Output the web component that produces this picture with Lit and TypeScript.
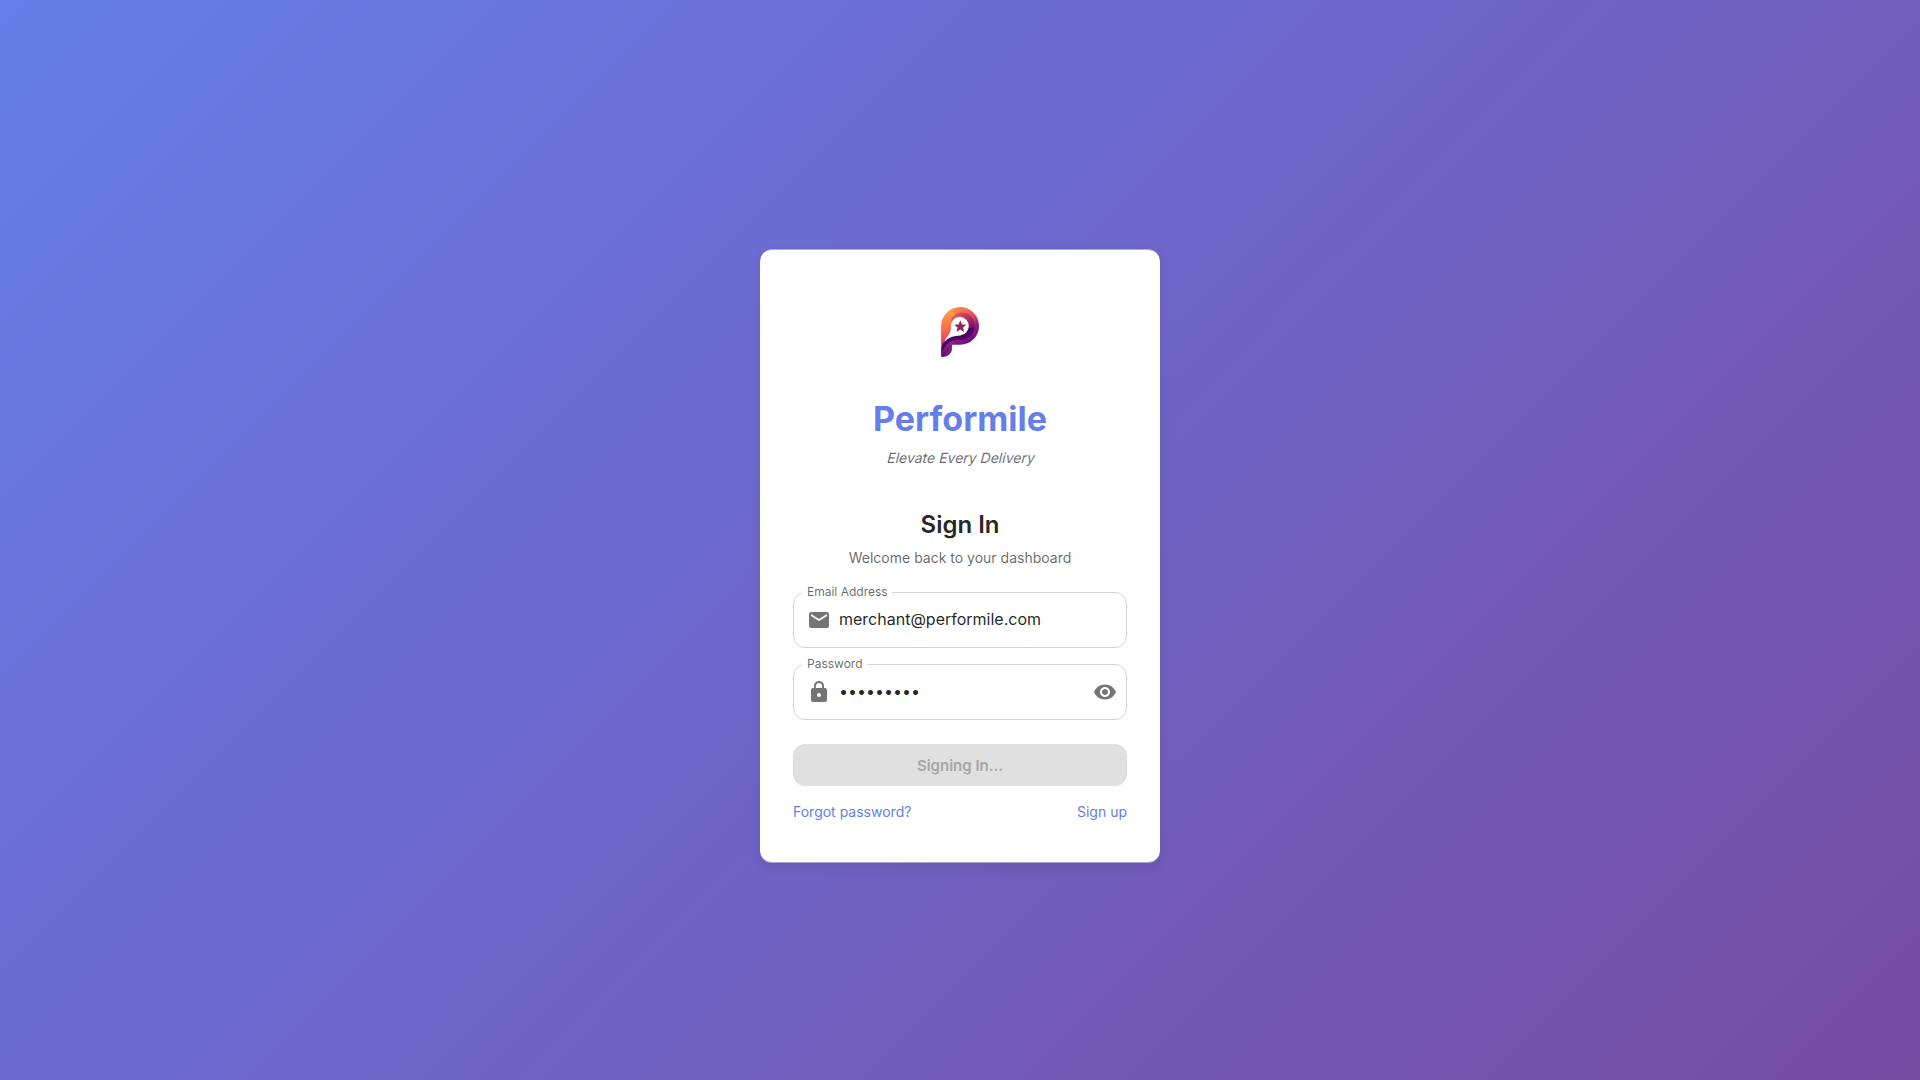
import { LitElement, html, css, svg } from "lit";
import { customElement, property } from "lit/decorators.js";

const icons = {
  mail: svg`<path d="M20 4H4c-1.1 0-1.99.9-1.99 2L2 18c0 1.1.9 2 2 2h16c1.1 0 2-.9 2-2V6c0-1.1-.9-2-2-2m0 4-8 5-8-5V6l8 5 8-5z"/>`,
  lock: svg`<path d="M18 8h-1V6c0-2.76-2.24-5-5-5S7 3.24 7 6v2H6c-1.1 0-2 .9-2 2v10c0 1.1.9 2 2 2h12c1.1 0 2-.9 2-2V10c0-1.1-.9-2-2-2m-6 9c-1.1 0-2-.9-2-2s.9-2 2-2 2 .9 2 2-.9 2-2 2m3.1-9H8.9V6c0-1.71 1.39-3.1 3.1-3.1s3.1 1.39 3.1 3.1z"/>`,
  eye: svg`<path d="M12 4.5C7 4.5 2.73 7.61 1 12c1.73 4.39 6 7.5 11 7.5s9.27-3.11 11-7.5c-1.73-4.39-6-7.5-11-7.5M12 17c-2.76 0-5-2.24-5-5s2.24-5 5-5 5 2.24 5 5-2.24 5-5 5m0-8c-1.66 0-3 1.34-3 3s1.34 3 3 3 3-1.34 3-3-1.34-3-3-3"/>`,
};

@customElement("brand-logo")
class BrandLogo extends LitElement {
  static styles = css`
    :host { display: block; width: 80px; height: 80px; }
    .mark { display: block; }
  `;
  render() {
    return html`<svg class="mark" width="80" height="80" viewBox="0 0 80 80">
      <defs>
        <linearGradient id="outer" gradientUnits="userSpaceOnUse" x1="27" y1="20" x2="51" y2="54">
          <stop offset="0" stop-color="#fd9a41"/><stop offset=".3" stop-color="#f66a50"/>
          <stop offset=".5" stop-color="#dc4564"/><stop offset=".72" stop-color="#8b1c7c"/>
          <stop offset="1" stop-color="#690983"/>
        </linearGradient>
        <linearGradient id="left" gradientUnits="userSpaceOnUse" x1="24" y1="24" x2="25" y2="54">
          <stop offset="0" stop-color="#fd9842"/><stop offset=".55" stop-color="#f76850"/>
          <stop offset="1" stop-color="#df3a72"/>
        </linearGradient>
        <linearGradient id="inner" gradientUnits="userSpaceOnUse" x1="34" y1="24" x2="52" y2="45">
          <stop offset="0" stop-color="#ee5952"/><stop offset=".5" stop-color="#a92a65"/>
          <stop offset="1" stop-color="#4c0567"/>
        </linearGradient>
        <linearGradient id="foot" gradientUnits="userSpaceOnUse" x1="30" y1="53" x2="23" y2="66">
          <stop offset="0" stop-color="#9b2386"/><stop offset="1" stop-color="#681178"/>
        </linearGradient>
      </defs>
      <path fill="url(#outer)" d="M21.3 36A19 19 0 0 1 40.2 17.1A18.8 18.8 0 0 1 59 36A18.8 18.8 0 0 1 40.2 54.8H32L21.3 66.8Z"/>
      <path fill="url(#left)" d="M21.3 36A19 19 0 0 1 33 18.5L35 26L31 36C31 44 27 46 24.5 51.5L21.3 57Z"/>
      <path fill="url(#inner)" d="M31 30C34 24 38 22 43 22.5C51 23.5 55 30 54.3 37C53.5 45 47 50 40 50L39 45Z"/>
      <path fill="#4d0567" d="M54 38C53 46 47 50 40 50C34 50 29 51 26 56L21.3 66V58C23 51 27 47 33 46C40 45 46 45 49 38Z"/>
      <path fill="url(#foot)" d="M21.3 66.8V63C24 58 26 54 32 54V58.5C32 63 28 67 22.5 67Z"/>
      <path fill="none" stroke="#55086e" stroke-width=".7" d="M22 65C26 63 28 58 31.5 55"/>
      <path fill="#fff" d="M31 37C30.7 30.8 35 26.7 40.3 26.7A9.4 9.4 0 0 1 40.3 45.4C33.5 45.8 28.5 47 24.3 52C26 46.5 31 44.5 31 37Z"/>
      <path fill="#952061" d="M40.3 30.3L42 34.4L46.4 34.7L43.1 37.6L44.1 42L40.3 39.6L36.5 42L37.5 37.6L34.2 34.7L38.6 34.4Z"/>
    </svg>`;
  }
}

@customElement("text-field")
class TextField extends LitElement {
  @property() label = "";
  @property() icon: "mail" | "lock" = "mail";
  @property() value = "";
  @property({ type: Boolean }) secret = false;

  static styles = css`
    :host { display: block; }
    .field {
      position: relative; display: flex; align-items: center;
      height: 56px; padding: 0 14px; box-sizing: border-box;
      color: rgba(0, 0, 0, 0.87); font-size: 16px;
    }
    .icon { width: 24px; height: 24px; fill: #757575; flex: none; }
    .toggle { margin-right: -4px; }
    .value {
      flex: 1; min-width: 0; margin: 0 0 0 8px; padding: 0 0 2px; border: 0; outline: 0;
      background: none; font: inherit; color: inherit; height: 23px;
    }
    .outline {
      position: absolute; inset: -5px 0 0; margin: 0; padding: 0 8px;
      border: 1px solid #d5d5d5; border-radius: 12px; pointer-events: none; min-width: 0;
    }
    .notch { height: 11px; padding: 0; font-size: 12px; line-height: 11px; visibility: hidden; }
    .notch-text { display: inline-block; padding: 0 4px 0 5px; }
    .label {
      position: absolute; left: 14px; top: -9px;
      font-size: 12px; line-height: 17px; color: rgba(0, 0, 0, 0.6);
    }
  `;
  render() {
    return html`<div class="field">
      <label class="label" for="input">${this.label}</label>
      <svg class="icon" viewBox="0 0 24 24">${icons[this.icon]}</svg>
      <input class="value" id="input" type=${this.secret ? "password" : "text"} .value=${this.value} />
      ${this.secret ? html`<svg class="icon toggle" viewBox="0 0 24 24">${icons.eye}</svg>` : ""}
      <fieldset class="outline"><legend class="notch"><span class="notch-text">${this.label}</span></legend></fieldset>
    </div>`;
  }
}

@customElement("app-root")
class AppRoot extends LitElement {
  static styles = css`
    :host {
      display: flex; justify-content: center; align-items: flex-start;
      box-sizing: border-box; height: 1080px; padding-top: 249px;
      background: linear-gradient(135deg, #667eea 0%, #764ba2 100%);
      font-family: Inter, Roboto, "Liberation Sans", sans-serif;
    }
    .card {
      box-sizing: border-box; width: 400px; height: 614px; padding: 40px 33px 0;
      display: flex; flex-direction: column; background: #fff padding-box; border-radius: 12px;
      border: solid rgba(255, 255, 255, 0.45); border-width: 1px 0;
      box-shadow: 0 4px 12px rgba(0, 0, 0, 0.08);
    }
    .logo { align-self: center; }
    .brand { margin: 28px 0 0; font-size: 34px; line-height: 42px; font-weight: 700; color: #667eea; text-align: center; }
    .tagline {
      margin: 8px 0 0; font-size: 14px; line-height: 20px; color: rgba(0, 0, 0, 0.6); text-align: center;
      transform: skewX(-14deg); transform-origin: 50% 75%;
    }
    .title { margin: 41px 0 0; font-size: 24px; line-height: 32px; font-weight: 600; color: rgba(0, 0, 0, 0.87); text-align: center; }
    .welcome { margin: 7px 0 0; font-size: 14px; line-height: 20px; color: rgba(0, 0, 0, 0.6); text-align: center; }
    .fields { display: flex; flex-direction: column; gap: 16px; margin-top: 24px; }
    .submit {
      margin: 24px 0 0; height: 42px; border: 0; border-radius: 12px; padding: 1px 0 0;
      background: #e0e0e0; color: #a6a6a6; font: 600 15px/26px Inter, sans-serif;
    }
    .links { display: flex; justify-content: space-between; margin-top: 16px; font-size: 14px; line-height: 20px; }
    .link { color: #667eea; text-decoration: none; }
  `;
  render() {
    return html`<main class="card">
      <brand-logo class="logo"></brand-logo>
      <h1 class="brand">Performile</h1>
      <p class="tagline">Elevate Every Delivery</p>
      <h2 class="title">Sign In</h2>
      <p class="welcome">Welcome back to your dashboard</p>
      <div class="fields">
        <text-field label="Email Address" icon="mail" value="merchant@performile.com"></text-field>
        <text-field label="Password" icon="lock" value="•••••••••" secret></text-field>
      </div>
      <button class="submit" disabled>Signing In...</button>
      <nav class="links"><a class="link" href="#">Forgot password?</a><a class="link" href="#">Sign up</a></nav>
    </main>`;
  }
}
